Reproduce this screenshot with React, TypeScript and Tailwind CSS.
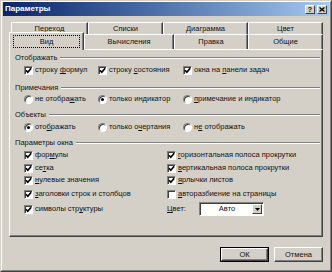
import React from "react";

const F = { fontFamily: '"Liberation Sans", Arial, sans-serif' };

function Check({ on }: { on: boolean }) {
  return (
    <span className="w-[9px] h-[9px] shrink-0 bg-white border border-t-[#808080] border-l-[#808080] border-b-white border-r-white shadow-[inset_1px_1px_0_#404040] flex items-center justify-center">
      {on && (
        <svg width="7" height="7" viewBox="0 0 7 7">
          <path d="M1 3.2 L2.8 5.2 L6.2 1.2" stroke="black" strokeWidth="1.7" fill="none" />
        </svg>
      )}
    </span>
  );
}

function Radio({ on }: { on: boolean }) {
  return (
    <span className="w-[9px] h-[9px] shrink-0 rounded-full bg-white border border-t-[#808080] border-l-[#808080] border-b-white border-r-white shadow-[inset_1px_1px_0_#404040] flex items-center justify-center">
      {on && <span className="w-[3px] h-[3px] rounded-full bg-black" />}
    </span>
  );
}

function Item({ kind, on, children }: { kind: "c" | "r"; on: boolean; children: React.ReactNode }) {
  return (
    <div className="flex items-center gap-[2px] whitespace-nowrap">
      {kind === "c" ? <Check on={on} /> : <Radio on={on} />}
      <span className="leading-none">{children}</span>
    </div>
  );
}

function Group({ title }: { title: string }) {
  return (
    <div className="flex items-center h-[11px] pl-[5px] pr-[2px]">
      <span className="leading-none whitespace-nowrap">{title}</span>
      <div className="flex-1 ml-[3px] h-[2px] border-t border-t-[#808080] border-b border-b-white" />
    </div>
  );
}

function Tab({ w, children }: { w: string; children: React.ReactNode }) {
  return (
    <div
      className={`${w} h-full flex items-center justify-center border-t border-l border-t-white border-l-white border-r border-r-[#404040] shadow-[inset_-1px_0_0_#808080] leading-none`}
    >
      {children}
    </div>
  );
}

export default function App() {
  return (
    <div style={F} className="w-[332px] h-[272px] bg-[#d4d0c8] text-[#111] text-[7.5px] border border-t-[#d4d0c8] border-l-[#d4d0c8] border-r-[#404040] border-b-[#404040]">
      <div className="w-full h-full border border-t-white border-l-white border-r-[#808080] border-b-[#808080] flex flex-col px-[1px]">
        {/* title bar */}
        <div className="h-[14px] bg-linear-to-r from-[#0a246a] to-[#a6caf0] flex items-center justify-between pl-[2px] pr-[2px]">
          <span className="text-white font-bold text-[8px] leading-none">Параметры</span>
          <div className="flex items-center gap-[2px]">
            <div className="w-[10px] h-[9px] bg-[#d4d0c8] border border-t-white border-l-white border-r-[#404040] border-b-[#404040] flex items-center justify-center text-[7px] font-bold leading-none text-black">
              ?
            </div>
            <div className="w-[10px] h-[9px] bg-[#d4d0c8] border border-t-white border-l-white border-r-[#404040] border-b-[#404040] flex items-center justify-center">
              <svg width="6" height="5" viewBox="0 0 6 5">
                <path d="M0.5 0.5 L5.5 4.5 M5.5 0.5 L0.5 4.5" stroke="black" strokeWidth="1.3" />
              </svg>
            </div>
          </div>
        </div>

        {/* tabs */}
        <div className="mt-[6px] ml-[6px] w-[314px] flex flex-col">
          <div className="h-[12px] flex pl-[2px]">
            <Tab w="w-[77px]">Переход</Tab>
            <Tab w="w-[75px]">Списки</Tab>
            <Tab w="w-[85px]">Диаграмма</Tab>
            <Tab w="w-[75px]">Цвет</Tab>
          </div>
          <div className="h-[15px] flex">
            <div className="relative z-10 w-[75px] h-[18px] -mt-[2px] bg-[#d4d0c8] flex items-center justify-center border-t border-l border-t-white border-l-white border-r border-r-[#404040] shadow-[inset_-1px_0_0_#808080] px-[3px] pt-[2px] pb-[2px]">
              <div className="w-full h-full border border-dotted border-black flex items-center justify-center leading-none">
                Вид
              </div>
            </div>
            <Tab w="w-[90px]">Вычисления</Tab>
            <Tab w="w-[74px]">Правка</Tab>
            <Tab w="w-[75px]">Общие</Tab>
          </div>
          {/* panel */}
          <div className="h-[188px] border-t border-l border-t-white border-l-white border-r border-b border-r-[#404040] border-b-[#404040] shadow-[inset_-1px_-1px_0_#808080] flex flex-col pt-[2px]">
            <Group title="Отображать" />
            <div className="h-[14px] grid grid-cols-[74px_85px_1fr] items-center pl-[14px]">
              <Item kind="c" on>строку <u>ф</u>ормул</Item>
              <Item kind="c" on>строку <u>с</u>остояния</Item>
              <Item kind="c" on>окна на <u>п</u>анели задач</Item>
            </div>
            <div className="h-[5px]" />
            <Group title="Примечания" />
            <div className="h-[12px] grid grid-cols-[74px_85px_1fr] items-center pl-[14px]">
              <Item kind="r" on={false}>не отобра<u>ж</u>ать</Item>
              <Item kind="r" on>только индикатор</Item>
              <Item kind="r" on={false}><u>п</u>римечание и индикатор</Item>
            </div>
            <div className="h-[4px]" />
            <Group title="Объекты" />
            <div className="h-[14px] grid grid-cols-[74px_85px_1fr] items-center pl-[14px]">
              <Item kind="r" on>ото<u>б</u>ражать</Item>
              <Item kind="r" on={false}>только о<u>ч</u>ертания</Item>
              <Item kind="r" on={false}>н<u>е</u> отображать</Item>
            </div>
            <div className="h-[3px]" />
            <Group title="Параметры окна" />
            <div className="grid grid-cols-[143px_1fr] grid-rows-[14px_12px_12px_16px_14px] items-center pl-[14px]">
              <Item kind="c" on>фор<u>м</u>улы</Item>
              <Item kind="c" on><u>г</u>оризонтальная полоса прокрутки</Item>
              <Item kind="c" on>се<u>т</u>ка</Item>
              <Item kind="c" on><u>в</u>ертикальная полоса прокрутки</Item>
              <Item kind="c" on><u>н</u>улевые значения</Item>
              <Item kind="c" on><u>я</u>рлычки листов</Item>
              <Item kind="c" on><u>з</u>аголовки строк и столбцов</Item>
              <Item kind="c" on={false}><u>а</u>вторазбиение на страницы</Item>
              <Item kind="c" on>символы стр<u>у</u>ктуры</Item>
              <div className="flex items-center">
                <span className="w-[32px] leading-none"><u>Ц</u>вет:</span>
                <div className="w-[65px] h-[14px] bg-white border border-t-[#808080] border-l-[#808080] border-b-white border-r-white shadow-[inset_1px_1px_0_#404040] flex items-center p-[1px] pl-[2px]">
                  <span className="flex-1 text-center leading-none">Авто</span>
                  <div className="w-[10px] h-full bg-[#d4d0c8] border border-t-white border-l-white border-r-[#404040] border-b-[#404040] flex items-center justify-center">
                    <svg width="5" height="3" viewBox="0 0 5 3">
                      <path d="M0 0 L5 0 L2.5 3 Z" fill="black" />
                    </svg>
                  </div>
                </div>
              </div>
            </div>
          </div>
        </div>

        {/* buttons */}
        <div className="mt-[10px] flex justify-end gap-[5px] pr-[6px]">
          <div className="w-[49px] h-[15px] border border-black">
            <div className="w-full h-full border border-t-white border-l-white border-r-[#404040] border-b-[#404040] shadow-[inset_-1px_-1px_0_#808080] flex items-center justify-center leading-none">
              ОК
            </div>
          </div>
          <div className="w-[49px] h-[15px] border border-t-white border-l-white border-r-[#404040] border-b-[#404040] shadow-[inset_-1px_-1px_0_#808080] flex items-center justify-center leading-none">
            Отмена
          </div>
        </div>
      </div>
    </div>
  );
}
